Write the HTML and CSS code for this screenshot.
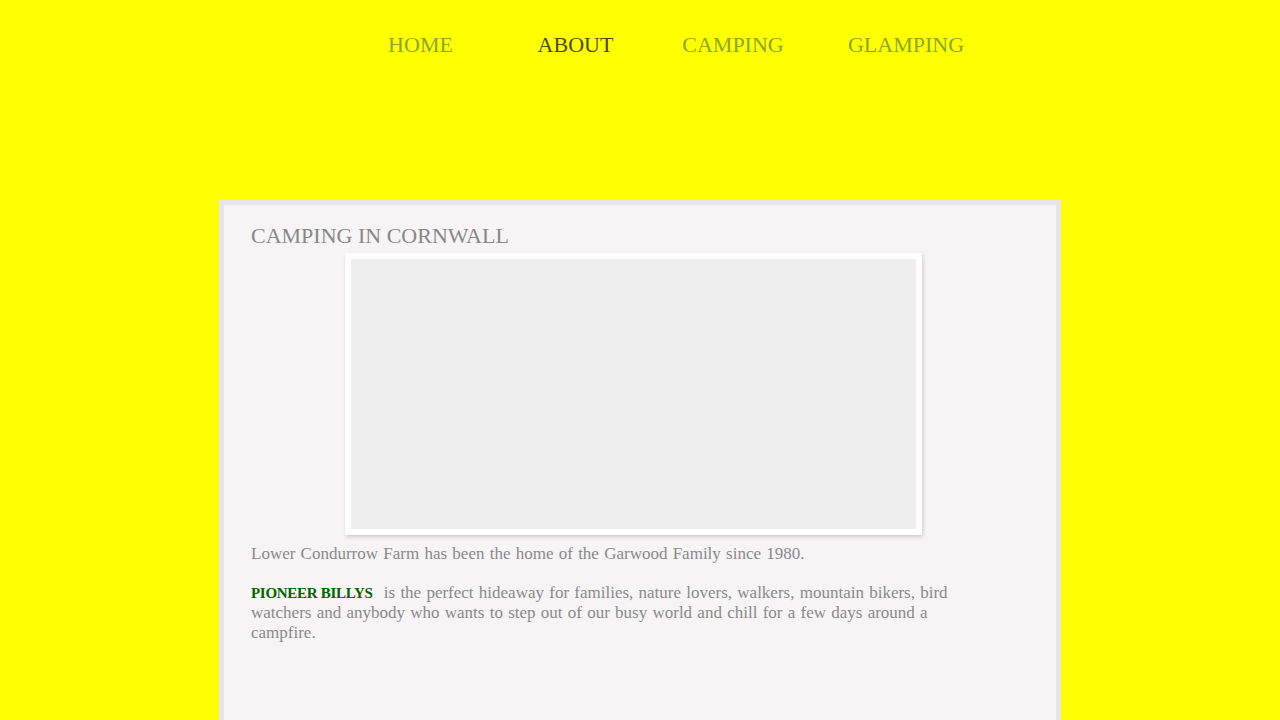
FILE: index.html
```html
<!DOCTYPE html>
<html>
<head>
<meta charset="utf-8">
<link rel="stylesheet" href="styles.css">
</head>
<body>
<nav class="nav">
  <a class="nav-item" href="#">HOME</a>
  <a class="nav-item active" href="#">ABOUT</a>
  <a class="nav-item" href="#">CAMPING</a>
  <a class="nav-item" href="#">GLAMPING</a>
</nav>
<main class="card">
  <h1 class="title">CAMPING IN CORNWALL</h1>
  <div class="photo"><div class="photo-inner"></div></div>
  <p class="text">Lower Condurrow Farm has been the home of the Garwood Family since 1980.</p>
  <p class="text"><span class="brand">PIONEER BILLYS</span> is the perfect hideaway for families, nature lovers, walkers, mountain bikers, bird watchers and anybody who wants to step out of our busy world and chill for a few days around a campfire.</p>
</main>
</body>
</html>
```

FILE: styles.css
```css
html, body {
  margin: 0;
  padding: 0;
  background: #ffff00;
  height: 720px;
  overflow: hidden;
}
body {
  font-family: "Liberation Serif", serif;
}
.nav {
  display: grid;
  grid-template-columns: 155px 155px 160px 186px;
  margin-left: 343px;
  padding-top: 30px;
  height: 200px;
  box-sizing: border-box;
}
.nav-item {
  text-align: center;
  font-size: 22px;
  line-height: 30px;
  color: #8aa828;
  text-decoration: none;
}
.nav-item.active {
  color: #4a4a0e;
}
.card {
  margin-left: 219px;
  width: 842px;
  height: 530px;
  box-sizing: border-box;
  background: #f6f4f5;
  border: 5px solid #e8e6ea;
  padding: 18px 27px 0 27px;
}
.title {
  margin: 0;
  font-weight: normal;
  font-size: 22px;
  line-height: 26px;
  color: #888888;
}
.photo {
  margin: 4px 0 0 94px;
  width: 577px;
  height: 282px;
  box-sizing: border-box;
  background: #ffffff;
  padding: 6px;
  box-shadow: 1px 2px 4px rgba(0, 0, 0, 0.18);
}
.photo-inner {
  width: 100%;
  height: 100%;
  background: #eeeeee;
}
.text {
  margin: 9px 0 19px 0;
  width: 720px;
  font-size: 17px;
  line-height: 19.5px;
  word-spacing: 1px;
  color: #8a8a8a;
}
.text + .text {
  margin-top: 0;
}
.brand {
  display: inline-block;
  margin-right: 6px;
  color: #006400;
  font-weight: bold;
  font-size: 15px;
  letter-spacing: -0.3px;
  word-spacing: 0;
}
```
